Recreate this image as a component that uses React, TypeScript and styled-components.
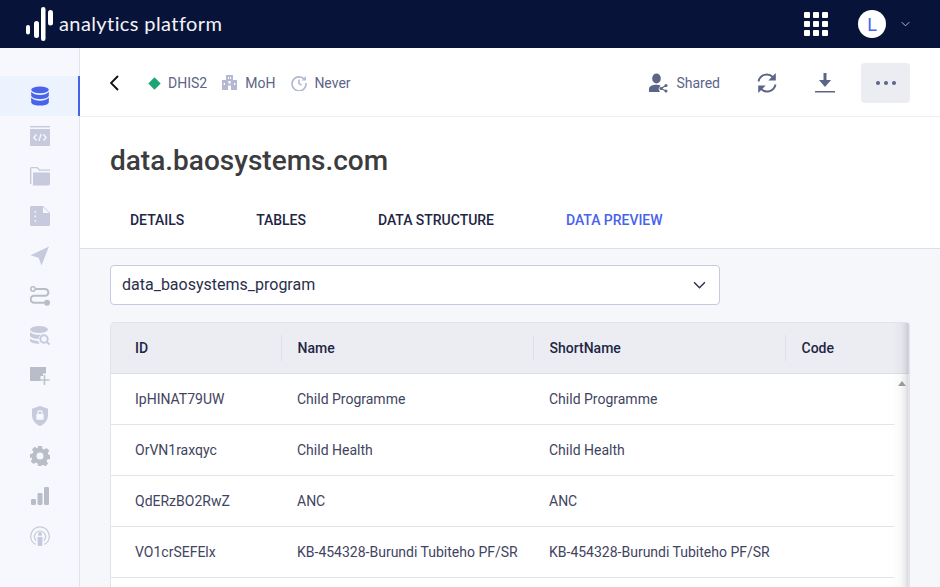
import React from "react";
import styled, { createGlobalStyle } from "styled-components";

const Global = createGlobalStyle`
  html, body { margin: 0; padding: 0; height: 100%; overflow: hidden; background: #fff; }
  body { font-family: Roboto, "Liberation Sans", sans-serif; }
  #root { height: 100%; }
  * { box-sizing: border-box; }
`;

const Page = styled.div`
  width: 940px;
  height: 587px;
  display: flex;
  flex-direction: column;
  overflow: hidden;
`;
const TopBar = styled.header`
  height: 48px;
  flex: none;
  background: #081339;
  display: flex;
  align-items: center;
  justify-content: space-between;
  padding: 0 30px 0 25px;
`;
const Logo = styled.div`
  display: flex;
  align-items: center;
  gap: 6px;
`;
const LogoText = styled.span`
  font-family: Lato, sans-serif;
  font-weight: 400;
  font-size: 20px;
  letter-spacing: 0.4px;
  color: #f2f3f7;
  margin-top: -3px;
`;
const TopRight = styled.div`
  display: flex;
  align-items: center;
`;
const Waffle = styled.div`
  display: grid;
  grid-template-columns: repeat(3, 6px);
  grid-auto-rows: 6px;
  gap: 3px;
  margin-right: 30px;
`;
const WaffleDot = styled.i`
  background: #fff;
  border-radius: 1px;
`;
const Avatar = styled.div`
  width: 28px;
  height: 28px;
  border-radius: 50%;
  background: #fff;
  color: #4763eb;
  font-size: 18px;
  font-weight: 400;
  display: flex;
  align-items: center;
  justify-content: center;
  margin-right: 15px;
`;
const Body = styled.div`
  flex: 1;
  display: flex;
  min-height: 0;
`;
const Sidebar = styled.nav`
  width: 80px;
  flex: none;
  background: #f7f8fd;
  border-right: 1px solid #e1e3f0;
  padding-top: 28px;
  display: flex;
  flex-direction: column;
`;
const NavItem = styled.div<{ $active?: boolean }>`
  height: 40px;
  flex: none;
  display: flex;
  align-items: center;
  justify-content: center;
  margin-right: -1px;
  background: ${(p) => (p.$active ? "#edf3fe" : "transparent")};
  border-right: 2px solid ${(p) => (p.$active ? "#4763eb" : "transparent")};
  & > svg { margin-left: 1px; }
`;
const Main = styled.main`
  flex: 1;
  min-width: 0;
  display: flex;
  flex-direction: column;
  background: #f6f7fb;
`;
const Toolbar = styled.div`
  height: 69px;
  flex: none;
  background: #fff;
  border-bottom: 1px solid #eceef5;
  display: flex;
  align-items: center;
  justify-content: space-between;
  padding: 2px 30px 0;
`;
const MetaRow = styled.div`
  display: flex;
  align-items: center;
`;
const Meta = styled.span<{ $ml: number; $gap: number }>`
  display: flex;
  align-items: center;
  gap: ${(p) => p.$gap}px;
  margin-left: ${(p) => p.$ml}px;
  font-size: 14px;
  color: #5c6488;
`;
const Actions = styled.div`
  display: flex;
  align-items: center;
`;
const SharedLabel = styled.span`
  display: flex;
  align-items: center;
  gap: 8px;
  font-size: 14px;
  color: #5c6488;
  margin-right: 37px;
`;
const IconAction = styled.span<{ $mr: number }>`
  display: flex;
  margin-right: ${(p) => p.$mr}px;
`;
const MoreButton = styled.button`
  width: 49px;
  height: 40px;
  border: 0;
  border-radius: 4px;
  background: #ecedf3;
  display: flex;
  align-items: center;
  justify-content: center;
  gap: 4px;
  padding: 0;
`;
const MoreDot = styled.i`
  width: 4px;
  height: 4px;
  border-radius: 50%;
  background: #5c6488;
`;
const Heading = styled.section`
  height: 132px;
  flex: none;
  background: #fff;
  border-bottom: 1px solid #dcdfeb;
  padding: 27px 30px 0;
`;
const Title = styled.h1`
  margin: 0;
  font-size: 28px;
  line-height: 34px;
  font-weight: 500;
  color: #3c3c3e;
`;
const Tabs = styled.div`
  display: flex;
  gap: 72px;
  padding-left: 20px;
  margin-top: 32px;
`;
const Tab = styled.span<{ $active?: boolean }>`
  font-size: 14px;
  line-height: 20px;
  font-weight: 500;
  letter-spacing: -0.03px;
  text-transform: uppercase;
  color: ${(p) => (p.$active ? "#4763eb" : "#1f2645")};
`;
const Content = styled.div`
  flex: 1;
  min-height: 0;
  padding: 16px 30px 0;
  display: flex;
  flex-direction: column;
`;
const Select = styled.div`
  width: 610px;
  height: 40px;
  flex: none;
  background: #fff;
  border: 1px solid #c6cadf;
  border-radius: 4px;
  display: flex;
  align-items: center;
  justify-content: space-between;
  padding: 0 13px 1px 11px;
  font-size: 16px;
  color: #2a2f4c;
`;
const TableBox = styled.div`
  position: relative;
  margin-top: 17px;
  width: 800px;
  flex: none;
  border: 1px solid #e0e2ec;
  border-radius: 4px 4px 0 0;
  background: #fff;
`;
const HeaderRow = styled.div`
  display: grid;
  grid-template-columns: 170px 252px 252px 1fr;
  height: 51px;
  background: #ecedf3;
  border-bottom: 1px solid #dcdeea;
  align-items: center;
  font-size: 14px;
  font-weight: 500;
  color: #1f2645;
`;
const HeadCell = styled.div<{ $first?: boolean }>`
  height: 26px;
  line-height: 26px;
  padding-left: ${(p) => (p.$first ? "24px" : "15.5px")};
  border-left: ${(p) => (p.$first ? "0" : "1px solid #dcdeea")};
`;
const Row = styled.div`
  display: grid;
  grid-template-columns: 170px 252px 252px 1fr;
  height: 51px;
  width: 783px;
  border-bottom: 1px solid #e2e3ec;
  align-items: center;
  font-size: 14px;
  color: #3f4461;
`;
const Cell = styled.div<{ $first?: boolean }>`
  padding-left: ${(p) => (p.$first ? "24px" : "16px")};
  white-space: nowrap;
`;
const EdgeShadow = styled.div`
  position: absolute;
  top: 0;
  right: 0;
  bottom: 0;
  width: 17px;
  pointer-events: none;
  background: linear-gradient(to right, rgba(60, 62, 80, 0) 0%, rgba(60, 62, 80, 0.03) 50%, rgba(60, 62, 80, 0.1) 78%, rgba(60, 62, 80, 0.2) 94%, rgba(60, 62, 80, 0.06) 100%);
`;
const ScrollArrow = styled.div`
  position: absolute;
  top: 58px;
  right: 3px;
  width: 0;
  height: 0;
  border-left: 4.5px solid transparent;
  border-right: 4.5px solid transparent;
  border-bottom: 5px solid #9a9a9a;
`;

const C1 = "#c6cadc";
const C2 = "#b9bdc7";

const DbIcon = () => (
  <svg width="20" height="20" viewBox="0 0 20 20">
    <g fill="#4763eb">
      <ellipse cx="10" cy="3.8" rx="8.8" ry="3.4" />
      <path d="M1.2 5.8C3 8 6.5 8.9 10 8.9s7-.9 8.8-3.1v3.6c0 1.9-3.9 3.5-8.8 3.5s-8.8-1.6-8.8-3.5z" />
      <path d="M1.2 11.6C3 13.8 6.5 14.7 10 14.7s7-.9 8.8-3.1v4.6c0 1.9-3.9 3.4-8.8 3.4s-8.8-1.5-8.8-3.4z" />
    </g>
  </svg>
);
const CodeIcon = () => (
  <svg width="20" height="20" viewBox="0 0 20 20">
    <rect x="0" y="0" width="20" height="1.4" fill={C1} />
    <rect x="0" y="3" width="20" height="17" fill={C1} />
    <path d="M6.5 8.5 3.8 11.5l2.7 3M13.5 8.5l2.7 3-2.7 3M11.2 8l-2.4 7" fill="none" stroke="#f7f8fd" strokeWidth="1.3" />
  </svg>
);
const FolderIcon = () => (
  <svg width="20" height="20" viewBox="0 0 20 20">
    <path d="M.7 18V2.7c0-.7.4-1.1 1-1.1h5.4l2.4 2.5H20" fill="none" stroke={C1} strokeWidth="1.4" />
    <path d="M3 6.4h16.2c.5 0 .8.4.8.8v10.6c0 1-.7 1.7-1.7 1.7H1.8c.8 0 1.2-.5 1.2-1.3z" fill={C1} />
  </svg>
);
const FileIcon = () => (
  <svg width="20" height="20" viewBox="0 0 20 20">
    <path d="M1.5 0H13l7 7v11.5c0 .8-.7 1.5-1.5 1.5h-17C.7 20 0 19.3 0 18.5v-17C0 .7.7 0 1.5 0z" fill={C1} />
    <path d="M13 1v5.2c0 .4.3.8.8.8H19z" fill="#f7f8fd" />
    <g fill="#f7f8fd">
      <rect x="4.5" y="5" width="1.6" height="1.6" />
      <rect x="4.5" y="9.5" width="1.6" height="1.6" />
      <rect x="4.5" y="14" width="1.6" height="1.6" />
    </g>
  </svg>
);
const SendIcon = () => (
  <svg width="20" height="20" viewBox="0 0 20 20">
    <path d="M19 .5 11.5 19.5 8.6 11.8.5 9.3z" fill={C1} />
  </svg>
);
const RouteIcon = () => (
  <svg width="20" height="20" viewBox="0 0 20 20">
    <path d="M5.5 3h9.5a3.4 3.4 0 0 1 0 6.8H4.2a3.5 3.5 0 0 0 0 7h10" fill="none" stroke={C2} strokeWidth="2" />
    <circle cx="3" cy="3" r="2.2" fill="#f7f8fd" stroke={C2} strokeWidth="1.5" />
    <circle cx="17" cy="16.8" r="3" fill={C2} />
  </svg>
);
const DbSearchIcon = () => (
  <svg width="20" height="20" viewBox="0 0 20 20">
    <ellipse cx="9" cy="3.5" rx="9" ry="3.5" fill={C1} />
    <path d="M0 6c2 2 5.5 2.8 9 2.8 1 0 2-.1 3-.2-2 .8-3.3 2.4-3.7 4.4C4.5 13 1.5 11.8 0 10.2zM0 12.5c1.5 1.5 4.5 2.3 8.3 2.5.2 1 .7 2 1.4 2.8-.2 0-.5 0-.7 0-5 0-9-1.4-9-3.3z" fill={C1} />
    <circle cx="14" cy="13" r="3.7" fill="none" stroke={C1} strokeWidth="2" />
    <path d="m16.7 15.8 2.8 2.8" stroke={C1} strokeWidth="2" />
  </svg>
);
const AddIcon = () => (
  <svg width="20" height="20" viewBox="0 0 20 20">
    <path d="M0 1H16V7.5H13V10H10.5V15H0z" fill={C2} />
    <path d="M14.5 9v10M9.5 14h10" stroke="#c0c3cb" strokeWidth="1.6" />
  </svg>
);
const ShieldIcon = () => (
  <svg width="16" height="20" viewBox="0 0 16 20">
    <path d="M8 0 16 2.8V9c0 5-3.3 9.2-8 11C3.3 18.2 0 14 0 9V2.8z" fill={C1} />
    <rect x="4.3" y="8" width="7.4" height="5.8" rx=".8" fill="#f7f8fd" />
    <path d="M5.900 8V6.700a2.100 2.100 0 0 1 4.200 0V8" fill="none" stroke="#f7f8fd" strokeWidth="1.2" />
  </svg>
);
const GearIcon = () => (
  <svg width="20" height="20" viewBox="0 0 20 20">
    <path
      fillRule="evenodd"
      fill={C2}
      d="M8 0h4l.5 2.700 1.700.7L16.500 1.900l2.800 2.800-1.500 2.300.7 1.700 1.500.3v4l-2.700.5-.7 1.700 1.500 2.300-2.800 2.800-2.300-1.500-1.700.7L12 20H8l-.5-2.700-1.700-.7-2.300 1.500L.7 15.300l1.500-2.300-.7-1.700L0 12V8l2.700-.5.7-1.700L1.900 3.500 4.700.7 7 2.200l.7-.3zM10 6.500a3.500 3.500 0 1 0 0 7 3.500 3.500 0 0 0 0-7z"
    />
  </svg>
);
const BarsIcon = () => (
  <svg width="18" height="18" viewBox="0 0 18 18">
    <g fill={C2}>
      <rect x="0" y="12" width="5" height="6" rx="1.2" />
      <rect x="6.5" y="6" width="5" height="12" rx="1.2" />
      <rect x="13" y="0" width="5" height="18" rx="1.2" />
    </g>
  </svg>
);
const PodIcon = () => (
  <svg width="20" height="20" viewBox="0 0 20 20">
    <g fill="none" stroke={C1} strokeWidth="1.2">
      <path d="M5.5 18.4A9.3 9.3 0 1 1 14.5 18.4" />
      <path d="M6 14.5a5.6 5.6 0 1 1 8 0" />
    </g>
    <circle cx="10" cy="8" r="2" fill={C1} />
    <path d="M7.5 11h5l-.2 9H7.700z" fill={C1} />
  </svg>
);

const LogoMark = () => (
  <svg width="28" height="34" viewBox="0 0 28 34" fill="#fff">
    <rect x="1" y="18" width="4" height="9.5" rx="2" />
    <rect x="9" y="14" width="5" height="17" rx="2.5" />
    <rect x="16" y="0" width="4.5" height="34" rx="2.2" />
    <rect x="23" y="3" width="5" height="15.5" rx="2.5" />
  </svg>
);

const Diamond = () => (
  <svg width="13" height="13" viewBox="0 0 13 13">
    <path d="M6.5.3 12.7 6.5 6.5 12.7.3 6.5z" fill="#1fa574" />
  </svg>
);
const BuildingIcon = () => (
  <svg width="15" height="16" viewBox="0 0 15 16">
    <path fillRule="evenodd" fill="#b4b9d1" d="M4 0h7v5h4v10H0V5h4zM6 2v2h1V2zM8 2v2h1V2zM6.3 6v2.4h2.4V6zM6 10.500V15h3v-4.500zM1.700 8v2h1.300V8zM12 8v2h1.300V8z" />
  </svg>
);
const HistoryIcon = () => (
  <svg width="16" height="16" viewBox="0 0 16 16">
    <path d="M13.5 4.5A7 7 0 1 0 15 8" fill="none" stroke="#b4b9d1" strokeWidth="1.7" />
    <path d="M15 1v4.500h-4.500z" fill="#b4b9d1" />
    <path d="M8 4.500V8.500l2.600 1.600" fill="none" stroke="#b4b9d1" strokeWidth="1.6" />
  </svg>
);
const SharedIcon = () => (
  <svg width="19" height="20" viewBox="0 0 19 20">
    <g fill="#5c6488">
      <ellipse cx="7.5" cy="5.5" rx="4.3" ry="5" />
      <path d="M0 19v-3c0-2.800 3.500-4.200 7.500-4.200 1.500 0 2.900.2 4.100.6L9.500 16l1.500 3z" />
      <circle cx="17" cy="12.5" r="1.5" />
      <circle cx="17" cy="18" r="1.5" />
      <circle cx="12" cy="15.5" r="1.5" />
    </g>
    <path d="m17 12.500-5 3 5 2.500" stroke="#5c6488" strokeWidth="1.2" fill="none" />
  </svg>
);
const RefreshIcon = () => (
  <svg width="20" height="20" viewBox="0 0 20 20">
    <path d="M1.5 8.5A8.5 8.5 0 0 1 15.8 4M18.5 11.5A8.5 8.5 0 0 1 4.2 16" fill="none" stroke="#5c6488" strokeWidth="1.9" />
    <path d="M18.8 0v7.5h-7.5zM1.2 20v-7.5h7.5z" fill="#5c6488" />
  </svg>
);
const DownloadIcon = () => (
  <svg width="20" height="20" viewBox="0 0 20 20">
    <path d="M8.5 0h3v7h4.500L10 14 4 7h4.500z" fill="#5c6488" />
    <rect x="0" y="18" width="20" height="1.5" fill="#5c6488" />
  </svg>
);
const BackIcon = () => (
  <svg width="10" height="16" viewBox="0 0 10 16">
    <path d="M8 1 1 8l7 7" fill="none" stroke="#111" strokeWidth="1.9" />
  </svg>
);
const Chevron = ({ color, w, h }: { color: string; w: number; h: number }) => (
  <svg width={w} height={h} viewBox="0 0 12 7">
    <path d="M1 1l5 5 5-5" fill="none" stroke={color} strokeWidth="1.3" />
  </svg>
);

const navIcons = [CodeIcon, FolderIcon, FileIcon, SendIcon, RouteIcon, DbSearchIcon, AddIcon, ShieldIcon, GearIcon, BarsIcon, PodIcon];

const rows = [
  ["IpHINAT79UW", "Child Programme", "Child Programme"],
  ["OrVN1raxqyc", "Child Health", "Child Health"],
  ["QdERzBO2RwZ", "ANC", "ANC"],
  ["VO1crSEFElx", "KB-454328-Burundi Tubiteho PF/SR", "KB-454328-Burundi Tubiteho PF/SR"],
  ["", "", ""],
];

export default function App() {
  return (
    <Page>
      <Global />
      <TopBar>
        <Logo>
          <LogoMark />
          <LogoText>analytics platform</LogoText>
        </Logo>
        <TopRight>
          <Waffle>
            {Array.from({ length: 9 }, (_, i) => (
              <WaffleDot key={i} />
            ))}
          </Waffle>
          <Avatar>L</Avatar>
          <Chevron color="#b6bbcc" w={9} h={6} />
        </TopRight>
      </TopBar>
      <Body>
        <Sidebar>
          <NavItem $active>
            <DbIcon />
          </NavItem>
          {navIcons.map((I, i) => (
            <NavItem key={i}>
              <I />
            </NavItem>
          ))}
        </Sidebar>
        <Main>
          <Toolbar>
            <MetaRow>
              <BackIcon />
              <Meta $ml={28} $gap={7}>
                <Diamond />
                DHIS2
              </Meta>
              <Meta $ml={15} $gap={8}>
                <BuildingIcon />
                MoH
              </Meta>
              <Meta $ml={16} $gap={7}>
                <HistoryIcon />
                Never
              </Meta>
            </MetaRow>
            <Actions>
              <SharedLabel>
                <SharedIcon />
                Shared
              </SharedLabel>
              <IconAction $mr={38}>
                <RefreshIcon />
              </IconAction>
              <IconAction $mr={26}>
                <DownloadIcon />
              </IconAction>
              <MoreButton>
                <MoreDot />
                <MoreDot />
                <MoreDot />
              </MoreButton>
            </Actions>
          </Toolbar>
          <Heading>
            <Title>data.baosystems.com</Title>
            <Tabs>
              <Tab>Details</Tab>
              <Tab>Tables</Tab>
              <Tab>Data structure</Tab>
              <Tab $active>Data preview</Tab>
            </Tabs>
          </Heading>
          <Content>
            <Select>
              data_baosystems_program
              <Chevron color="#2a2f4c" w={13} h={8} />
            </Select>
            <TableBox>
              <HeaderRow>
                <HeadCell $first>ID</HeadCell>
                <HeadCell>Name</HeadCell>
                <HeadCell>ShortName</HeadCell>
                <HeadCell>Code</HeadCell>
              </HeaderRow>
              {rows.map((r, i) => (
                <Row key={i}>
                  <Cell $first>{r[0]}</Cell>
                  <Cell>{r[1]}</Cell>
                  <Cell>{r[2]}</Cell>
                  <Cell />
                </Row>
              ))}
              <EdgeShadow />
              <ScrollArrow />
            </TableBox>
          </Content>
        </Main>
      </Body>
    </Page>
  );
}
